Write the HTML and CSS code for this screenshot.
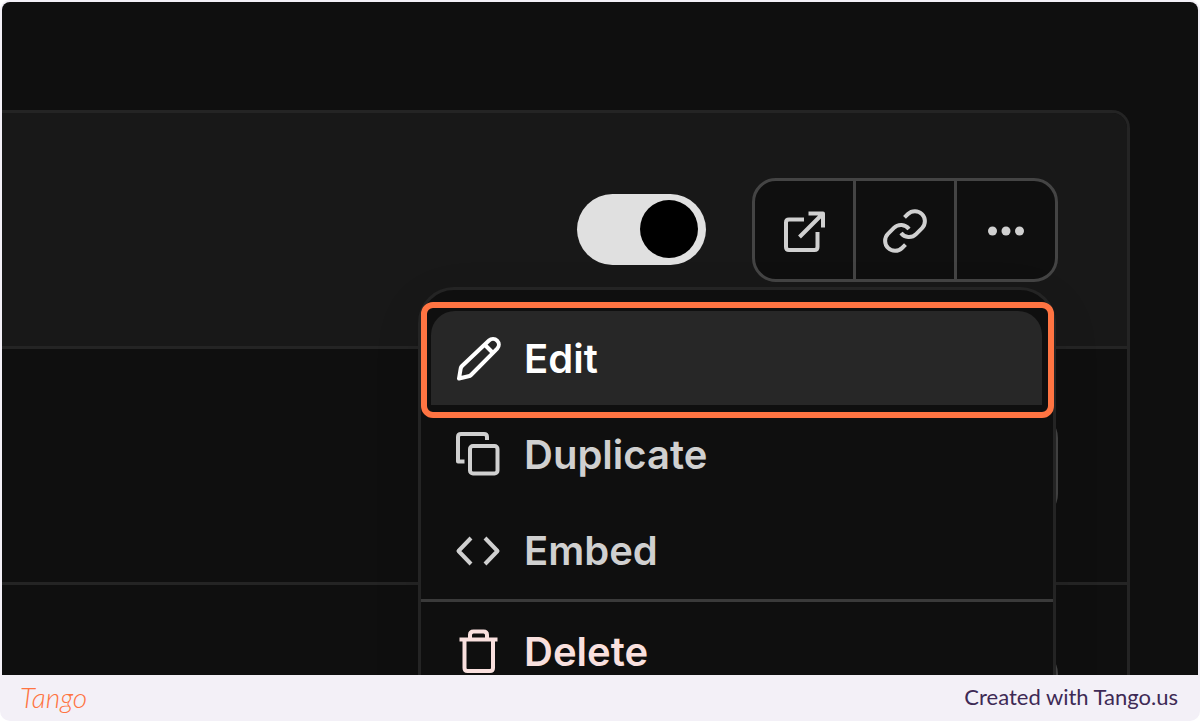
FILE: index.html
```html
<!DOCTYPE html>
<html lang="en">
<head>
  <meta charset="UTF-8">
  <meta name="viewport" content="width=device-width, initial-scale=1.0">
  <title>Tango</title>
  <link rel="stylesheet" href="styles.css">
</head>
<body>
  <div class="frame">
    <main class="screen">
      <div class="card">
        <div class="row row-head">
          <input type="checkbox" class="toggle" aria-label="Enabled" checked>
          <div class="actions">
            <div class="btn-group">
              <button type="button" aria-label="Open">
                <svg class="icon" viewBox="0 0 48 48">
                  <path d="M24 12.5H9Q6 12.5 6 15.5V40Q6 43 9 43H34.500Q37.500 43 37.500 40V25"/>
                  <path d="M19.500 30L43 6.500M28.500 6.500H43V20.500"/>
                </svg>
              </button>
              <button type="button" aria-label="Copy link">
                <svg class="icon icon-link" viewBox="0 0 24 24">
                  <path d="M10 13a5 5 0 0 0 7.54.54l3-3a5 5 0 0 0-7.07-7.07l-1.72 1.71"/>
                  <path d="M14 11a5 5 0 0 0-7.54-.54l-3 3a5 5 0 0 0 7.07 7.07l1.71-1.71"/>
                </svg>
              </button>
              <button type="button" aria-label="More">
                <svg class="icon icon-dots" viewBox="0 0 48 48">
                  <circle cx="10.500" cy="24" r="4.500"/>
                  <circle cx="24" cy="24" r="4.500"/>
                  <circle cx="37.500" cy="24" r="4.500"/>
                </svg>
              </button>
            </div>

            <div class="menu" role="menu">
              <button type="button" class="item active" role="menuitem">
                <svg class="icon" viewBox="0 0 48 48">
                  <path d="M35 5.500a5.800 5.800 0 0 1 8.200 8.200L17 40Q16 41 14.500 41.300L5 43.500L6.700 33.500Q7 32 8 31Z"/>
                  <path d="M31 10L38.500 17.500"/>
                </svg>
                <span>Edit</span>
              </button>
              <button type="button" class="item" role="menuitem">
                <svg class="icon" viewBox="0 0 48 48">
                  <rect x="16" y="15" width="27.500" height="27.500" rx="3"/>
                  <path d="M33 9V6Q33 3 30 3H7Q4 3 4 6V30.500H10.500"/>
                </svg>
                <span>Duplicate</span>
              </button>
              <button type="button" class="item" role="menuitem">
                <svg class="icon" viewBox="0 0 48 48">
                  <path d="M17 11L4.500 24L17 37M31 11L43.500 24L31 37"/>
                </svg>
                <span>Embed</span>
              </button>
              <hr>
              <button type="button" class="item danger" role="menuitem">
                <svg class="icon" viewBox="0 0 48 48">
                  <path d="M5.500 11.500H43.500M16 11V7Q16 3.500 19.500 3.500H29.500Q33 3.500 33 7V11"/>
                  <path d="M10.500 12V40Q10.500 43 13.500 43H36Q39 43 39 40V12"/>
                </svg>
                <span>Delete</span>
              </button>
            </div>
          </div>
        </div>
        <div class="row"><div class="btn-group"></div></div>
        <div class="row"><div class="btn-group"></div></div>
      </div>
    </main>

    <footer>
      <div class="logo">Tango</div>
      <div class="credit">Created with Tango.us</div>
    </footer>
  </div>
</body>
</html>
```

FILE: styles.css
```css
* {
  box-sizing: border-box;
  margin: 0;
  padding: 0;
}

body {
  font-family: Inter, 'Liberation Sans', sans-serif;
  background: #fff;
}

.frame {
  display: flex;
  flex-direction: column;
  height: 100vh;
  padding: 2px 2px 0;
  background: #f3f0f7;
  border-radius: 10px;
}

.screen {
  flex: 1;
  min-height: 0;
  overflow: hidden;
  padding: 108px 68px 0 0;
  background: #0f0f0f;
  border-radius: 8px 8px 0 0;
}

.card {
  border: 3px solid #242424;
  border-left: none;
  border-radius: 0 18px 0 0;
}

.row {
  display: flex;
  justify-content: flex-end;
  align-items: center;
  gap: 46px;
  height: 236px;
  padding-right: 69px;
  border-bottom: 3px solid #242424;
}

.row-head {
  background: #181818;
  border-radius: 0 15px 0 0;
}

/* toggle */
.toggle {
  appearance: none;
  display: flex;
  align-items: center;
  justify-content: flex-end;
  width: 129px;
  height: 71px;
  padding: 0 8px 2px;
  border-radius: 36px;
  background: #e0e0e0;
  cursor: pointer;
}

.toggle::before {
  content: "";
  width: 58px;
  height: 58px;
  border-radius: 50%;
  background: #000;
}

.toggle:not(:checked) {
  justify-content: flex-start;
}

/* buttons */
.actions {
  position: relative;
}

.btn-group {
  display: flex;
  width: 306px;
  height: 104px;
  border: 3px solid #444;
  border-radius: 24px;
  background: #0f0f0f;
}

.btn-group button {
  box-sizing: content-box;
  flex: 1;
  display: flex;
  align-items: center;
  justify-content: center;
  padding-top: 2px;
  border: none;
  background: none;
  color: #d0d0d0;
  cursor: pointer;
}

.btn-group button + button {
  border-left: 3px solid #444;
}

.icon {
  flex: none;
  width: 48px;
  height: 48px;
  fill: none;
  stroke: currentColor;
  stroke-width: 4;
  stroke-linejoin: round;
}

.icon-link {
  stroke-width: 2;
}

.icon-dots {
  fill: currentColor;
  stroke: none;
}

/* dropdown menu */
.menu {
  position: absolute;
  top: calc(100% + 5px);
  right: 2px;
  z-index: 10;
  display: flex;
  flex-direction: column;
  gap: 2px;
  width: 638px;
  padding: 21px 11px 21px 10px;
  border: 3px solid #242424;
  border-radius: 36px;
  background: #0f0f0f;
  box-shadow: 0 16px 48px rgba(0, 0, 0, 0.1);
}

.item {
  position: relative;
  display: flex;
  align-items: center;
  gap: 22px;
  height: 94px;
  padding: 2px 23px 0;
  border: none;
  background: none;
  color: #d0d0d0;
  font-family: inherit;
  font-size: 40px;
  font-weight: 600;
  cursor: pointer;
}

.item.active {
  background: #272727;
  border-radius: 24px 24px 0 0;
  color: #fff;
}

/* highlight box around the current step */
.item.active::after {
  content: "";
  position: absolute;
  inset: -9px -12px -13px -10px;
  border: 6px solid #ff7442;
  border-radius: 12px;
}

.item.danger {
  color: #f9e0de;
}

.menu hr {
  height: 3px;
  margin: 0 -11px 0 -10px;
  border: none;
  background: #3a3a3a;
}

/* footer */
footer {
  display: flex;
  justify-content: space-between;
  align-items: center;
  height: 46px;
  padding: 0 20px 3px 18px;
}

.logo {
  color: #ff7442;
  font-family: Lato, sans-serif;
  font-size: 28px;
  font-style: italic;
  font-weight: 300;
}

.credit {
  color: #3e2a55;
  font-family: Lato, sans-serif;
  font-size: 22px;
}
```
